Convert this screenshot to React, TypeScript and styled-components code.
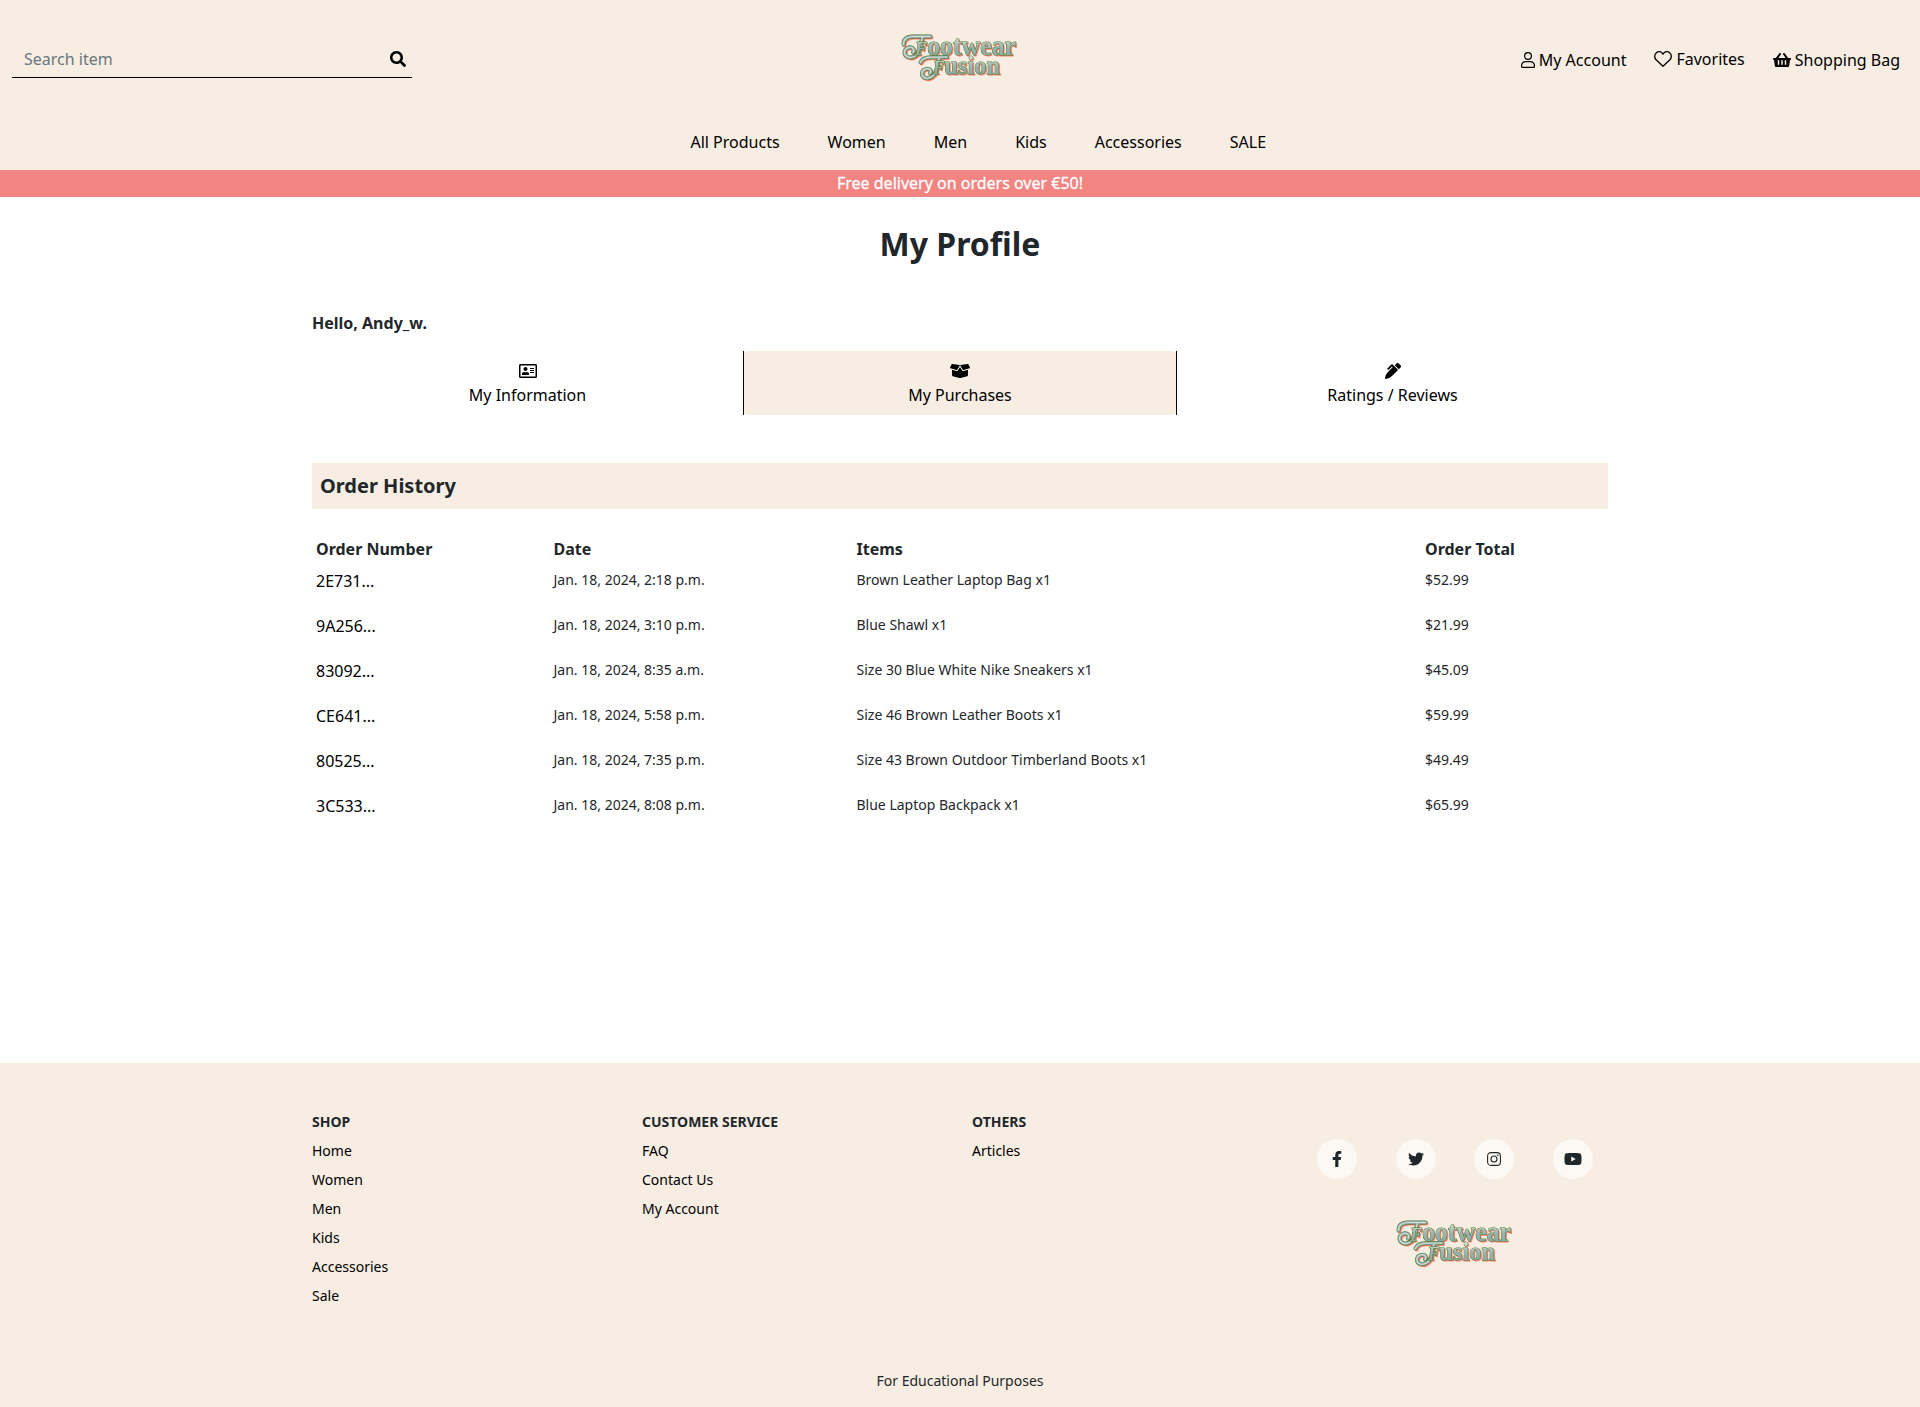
import React from 'react';
import styled, { createGlobalStyle } from 'styled-components';
import { FaShoppingBasket, FaRegAddressCard, FaBoxOpen, FaSearch, FaFacebookF, FaTwitter, FaYoutube, FaPenAlt } from 'react-icons/fa';

const Global = createGlobalStyle`
  *, *::before, *::after { box-sizing: border-box; }
  body { margin: 0; background: #fff; color: #1f272b; font: 400 16px/24px "Noto Sans", sans-serif; }
  a { color: #000; text-decoration: none; }
  h1, h2, h3, p, ul { margin: 0; padding: 0; }
  ul { list-style: none; }
`;

const Page = styled.div`
  display: flex;
  flex-direction: column;
  min-height: 1407px;
`;

const Header = styled.header`
  height: 170px;
  background: #f7ede2;
`;

const TopBar = styled.div`
  display: grid;
  grid-template-columns: 1fr auto 1fr;
  height: 118px;
`;

const SearchForm = styled.form`
  display: flex;
  align-items: center;
  width: 400px;
  height: 38px;
  margin: 40px 0 0 12px;
  padding: 0 6px 0 12px;
  border-bottom: 1px solid #000;
`;

const SearchInput = styled.input`
  flex: 1;
  min-width: 0;
  padding: 0;
  border: 0;
  outline: 0;
  background: transparent;
  font: inherit;
  &::placeholder { color: #6a777d; opacity: 1; }
`;

const SearchButton = styled.button`
  display: flex;
  padding: 0;
  border: 0;
  background: none;
  color: #000;
  font-size: 16px;
`;

const Icon = styled.span<{ $width: number; $height?: number }>`
  display: flex;
  flex: none;
  width: ${p => p.$width}px;
  height: ${p => p.$height ?? 16}px;
  svg { display: block; width: 100%; height: 100%; }
`;

const LogoSvg = styled.svg`
  display: block;
  width: 120px;
  height: 52px;
  overflow: visible;
  font-family: "Liberation Serif", serif;
  font-weight: 700;
`;

const LogoInk = styled.g`
  filter: drop-shadow(1px 1px 0.7px #fa8072);
`;

const LogoText = styled.text`
  fill: url(#logo-ink);
  stroke: #3c7b28;
  stroke-width: 1px;
  stroke-linejoin: round;
  paint-order: stroke;
`;

const HeaderLogo = styled.div`
  padding-top: 32px;
`;

const AccountLinks = styled.nav`
  display: flex;
  justify-content: flex-end;
  gap: 28px;
  padding: 48px 20px 0 0;
`;

const AccountLink = styled.a<{ $lift?: number }>`
  display: flex;
  align-items: center;
  gap: 4px;
  height: 24px;
  margin-top: ${p => -(p.$lift ?? 0)}px;
`;

const MainNav = styled.nav`
  display: flex;
  justify-content: center;
  gap: 48px;
  padding: 12px 0 0 36.5px;
`;

const Banner = styled.p`
  height: 27px;
  background: #f28482;
  color: #fff;
  font-weight: 400;
  -webkit-text-stroke: 0.3px #fff;
  line-height: 26px;
  text-align: center;
`;

const Main = styled.main`
  flex: 1;
  width: 1296px;
  margin: 0 auto;
`;

const Title = styled.h1`
  padding-top: 28px;
  font-size: 32px;
  font-weight: 700;
  line-height: 38px;
  text-align: center;
`;

const Greeting = styled.p`
  margin-top: 48px;
  font-weight: 700;
`;

const Tabs = styled.nav`
  display: grid;
  grid-template-columns: repeat(3, 1fr);
  height: 64px;
  margin-top: 16px;
`;

const TabCell = styled.div`
  &:first-child { border-right: 1px solid #000; }
  &:last-child { border-left: 1px solid #000; }
`;

const Tab = styled.a<{ $active?: boolean }>`
  display: flex;
  flex-direction: column;
  align-items: center;
  gap: 4px;
  height: 64px;
  padding-top: 12px;
  border-radius: 4px;
  background: ${p => (p.$active ? '#f7ede2' : 'transparent')};
`;

const SectionTitle = styled.h2`
  height: 46px;
  margin-top: 48px;
  padding: 0 8px;
  background: #f7ede2;
  font-size: 20px;
  font-weight: 700;
  line-height: 46px;
`;

const Row = styled.div`
  display: grid;
  grid-template-columns: 237.5px 303px 568.5px 187px;
`;

const Table = styled.div`
  margin-top: 24px;
`;

const HeadCell = styled.div`
  height: 32px;
  padding: 4px;
  font-weight: 700;
`;

const Cell = styled.div`
  height: 45px;
  padding: 4px;
  font-size: 14px;
  line-height: 21px;
  a { display: block; font-size: 16px; line-height: 24px; }
`;

const Footer = styled.footer`
  display: flex;
  flex-direction: column;
  align-items: center;
  height: 344px;
  background: #f7ede2;
  font-size: 14px;
  line-height: 21px;
`;

const FooterGrid = styled.div`
  display: grid;
  grid-template-columns: 330px 330px 330px 306px;
  width: 1296px;
  height: 307px;
  padding-top: 48px;
`;

const LinkList = styled.ul`
  display: flex;
  flex-direction: column;
  gap: 8px;
`;

const ListTitle = styled.li`
  font-weight: 700;
`;

const Brand = styled.div`
  display: flex;
  flex-direction: column;
  align-items: center;
  gap: 39px;
  padding-top: 28px;
`;

const Socials = styled.div`
  display: flex;
  justify-content: space-between;
  width: 276px;
`;

const Social = styled.a`
  display: flex;
  align-items: center;
  justify-content: center;
  width: 40px;
  height: 40px;
  border-radius: 50%;
  background: #fcf8f3;
  color: #1f272b;
`;

function UserIcon() {
  return (
    <svg viewBox="0 0 14 16" fill="none" stroke="currentColor" strokeWidth="1.2">
      <circle cx="7" cy="4" r="3.4" />
      <path d="M4.7 9.6h4.6c2.3 0 4.1 1.8 4.1 4.1v.7c0 .6-.4 1-1 1H1.6c-.6 0-1-.4-1-1v-.7c0-2.3 1.8-4.1 4.1-4.1Z" />
    </svg>
  );
}

function HeartIcon() {
  return (
    <svg viewBox="0 0 18 18" fill="none" stroke="currentColor" strokeWidth="1.3" strokeLinejoin="round">
      <path d="M9 4.1C7.5 1.3 4.4 1 2.4 2.7.2 4.6.2 7.8 2.1 9.8L9 16.3l6.9-6.5c1.9-2 1.9-5.2-.3-7.1C13.6 1 10.5 1.3 9 4.1Z" />
    </svg>
  );
}

function InstagramIcon() {
  return (
    <svg viewBox="0 0 14 14" fill="none" stroke="currentColor" strokeWidth="1.1">
      <rect x=".6" y=".6" width="12.8" height="12.8" rx="3.4" />
      <circle cx="7" cy="7" r="3" />
      <circle cx="10.7" cy="3.3" r=".8" fill="currentColor" stroke="none" />
    </svg>
  );
}

function Flourishes() {
  return (
    <>
      <path d="M3.5 12.5C3.5 6.500 8 4.500 13 4.500h17.500" />
      <path d="M22.5 5.500c-2 4-1 9-3.500 14-2 4.500-7 7-11 5.500-5-2-4.500-8 .5-9.500 4-1 6.500 2 4.500 5" />
      <path d="M20.5 30.500c1.500-4 5-5 10-5.200L47 25" />
      <path d="M39 26.500c-2 4-.5 8-3 13-2 5-7 7.500-10.500 6.500-5-1.500-4.500-7.500 0-9 4-1.200 6.500 1.500 4.500 4.500" />
    </>
  );
}

function Logo() {
  return (
    <LogoSvg viewBox="0 0 120 52" role="img" aria-label="Footwear Fusion">
      <defs>
        <linearGradient id="logo-ink" x1="0" y1="0" x2="0" y2="1">
          <stop offset=".25" stopColor="#d3dad4" />
          <stop offset=".55" stopColor="#9bb3af" />
          <stop offset="1" stopColor="#84a5a0" />
        </linearGradient>
      </defs>
      <LogoInk>
        <g fill="none" strokeLinecap="round">
          <g stroke="#3c7b28" strokeWidth="3.9"><Flourishes /></g>
          <g stroke="#8faaa6" strokeWidth="3"><Flourishes /></g>
          <g stroke="#dce0d8" strokeWidth="1.1"><Flourishes /></g>
        </g>
        <LogoText x="15" y="23" fontSize="27" textLength="101" lengthAdjust="spacingAndGlyphs">
          <tspan fontSize="19" fontStyle="italic">F</tspan>ootwear
        </LogoText>
        <LogoText x="33" y="41.5" fontSize="26" textLength="67" lengthAdjust="spacingAndGlyphs">
          <tspan fontSize="18" fontStyle="italic">F</tspan>usion
        </LogoText>
      </LogoInk>
    </LogoSvg>
  );
}

const navItems = ['All Products', 'Women', 'Men', 'Kids', 'Accessories', 'SALE'];

const columns = ['Order Number', 'Date', 'Items', 'Order Total'];

const orders = [
  ['2E731...', 'Jan. 18, 2024, 2:18 p.m.', 'Brown Leather Laptop Bag x1', '$52.99'],
  ['9A256...', 'Jan. 18, 2024, 3:10 p.m.', 'Blue Shawl x1', '$21.99'],
  ['83092...', 'Jan. 18, 2024, 8:35 a.m.', 'Size 30 Blue White Nike Sneakers x1', '$45.09'],
  ['CE641...', 'Jan. 18, 2024, 5:58 p.m.', 'Size 46 Brown Leather Boots x1', '$59.99'],
  ['80525...', 'Jan. 18, 2024, 7:35 p.m.', 'Size 43 Brown Outdoor Timberland Boots x1', '$49.49'],
  ['3C533...', 'Jan. 18, 2024, 8:08 p.m.', 'Blue Laptop Backpack x1', '$65.99'],
];

const footerLists = [
  { title: 'SHOP', links: ['Home', 'Women', 'Men', 'Kids', 'Accessories', 'Sale'] },
  { title: 'CUSTOMER SERVICE', links: ['FAQ', 'Contact Us', 'My Account'] },
  { title: 'OTHERS', links: ['Articles'] },
];

export default function App() {
  return (
    <Page>
      <Global />
      <Header>
        <TopBar>
          <SearchForm>
            <SearchInput placeholder="Search item" />
            <SearchButton type="button" aria-label="Search"><FaSearch /></SearchButton>
          </SearchForm>
          <HeaderLogo><Logo /></HeaderLogo>
          <AccountLinks>
            <AccountLink href="#"><Icon $width={14}><UserIcon /></Icon>My Account</AccountLink>
            <AccountLink href="#" $lift={1}><Icon $width={18} $height={18}><HeartIcon /></Icon>Favorites</AccountLink>
            <AccountLink href="#"><Icon $width={18}><FaShoppingBasket /></Icon>Shopping Bag</AccountLink>
          </AccountLinks>
        </TopBar>
        <MainNav>{navItems.map(item => <a href="#" key={item}>{item}</a>)}</MainNav>
      </Header>
      <Banner>Free delivery on orders over €50!</Banner>
      <Main>
        <Title>My Profile</Title>
        <Greeting>Hello, Andy_w.</Greeting>
        <Tabs>
          <TabCell><Tab href="#"><Icon $width={18}><FaRegAddressCard /></Icon>My Information</Tab></TabCell>
          <TabCell><Tab href="#" $active><Icon $width={20}><FaBoxOpen /></Icon>My Purchases</Tab></TabCell>
          <TabCell><Tab href="#"><Icon $width={16}><FaPenAlt /></Icon>Ratings / Reviews</Tab></TabCell>
        </Tabs>
        <SectionTitle>Order History</SectionTitle>
        <Table role="table">
          <Row role="row">{columns.map(label => <HeadCell role="columnheader" key={label}>{label}</HeadCell>)}</Row>
          {orders.map(([id, date, item, total]) => (
            <Row role="row" key={id}>
              <Cell role="cell"><a href="#">{id}</a></Cell>
              <Cell role="cell">{date}</Cell>
              <Cell role="cell">{item}</Cell>
              <Cell role="cell">{total}</Cell>
            </Row>
          ))}
        </Table>
      </Main>
      <Footer>
        <FooterGrid>
          {footerLists.map(list => (
            <LinkList key={list.title}>
              <ListTitle>{list.title}</ListTitle>
              {list.links.map(l => <li key={l}><a href="#">{l}</a></li>)}
            </LinkList>
          ))}
          <Brand>
            <Socials>
              <Social href="#" aria-label="Facebook"><Icon $width={16}><FaFacebookF /></Icon></Social>
              <Social href="#" aria-label="Twitter"><Icon $width={16}><FaTwitter /></Icon></Social>
              <Social href="#" aria-label="Instagram"><Icon $width={14} $height={14}><InstagramIcon /></Icon></Social>
              <Social href="#" aria-label="YouTube"><Icon $width={18}><FaYoutube /></Icon></Social>
            </Socials>
            <Logo />
          </Brand>
        </FooterGrid>
        <p>For Educational Purposes</p>
      </Footer>
    </Page>
  );
}
